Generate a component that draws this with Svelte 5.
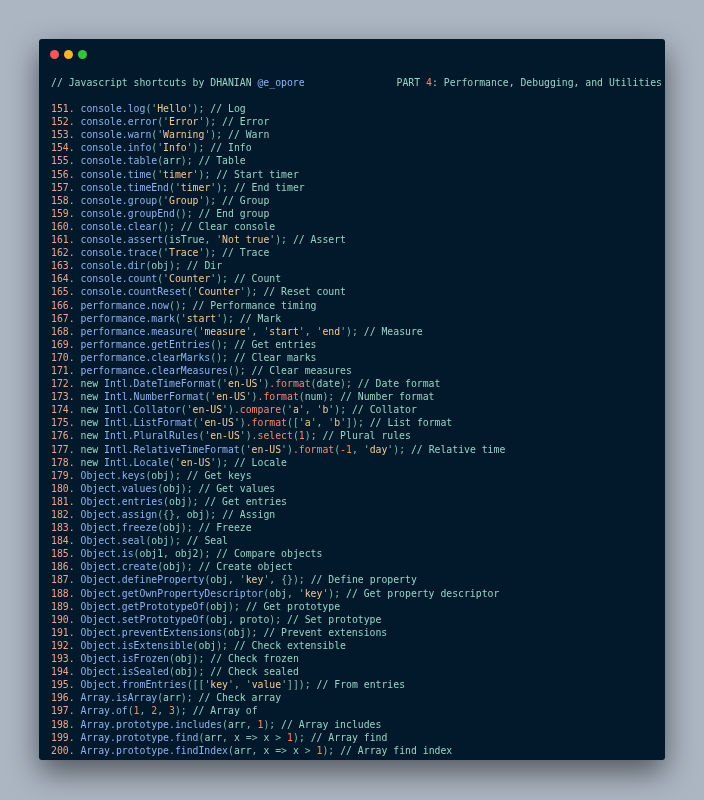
<script lang="ts">
  const source = `console.log('Hello'); // Log
console.error('Error'); // Error
console.warn('Warning'); // Warn
console.info('Info'); // Info
console.table(arr); // Table
console.time('timer'); // Start timer
console.timeEnd('timer'); // End timer
console.group('Group'); // Group
console.groupEnd(); // End group
console.clear(); // Clear console
console.assert(isTrue, 'Not true'); // Assert
console.trace('Trace'); // Trace
console.dir(obj); // Dir
console.count('Counter'); // Count
console.countReset('Counter'); // Reset count
performance.now(); // Performance timing
performance.mark('start'); // Mark
performance.measure('measure', 'start', 'end'); // Measure
performance.getEntries(); // Get entries
performance.clearMarks(); // Clear marks
performance.clearMeasures(); // Clear measures
new Intl.DateTimeFormat('en-US').format(date); // Date format
new Intl.NumberFormat('en-US').format(num); // Number format
new Intl.Collator('en-US').compare('a', 'b'); // Collator
new Intl.ListFormat('en-US').format(['a', 'b']); // List format
new Intl.PluralRules('en-US').select(1); // Plural rules
new Intl.RelativeTimeFormat('en-US').format(-1, 'day'); // Relative time
new Intl.Locale('en-US'); // Locale
Object.keys(obj); // Get keys
Object.values(obj); // Get values
Object.entries(obj); // Get entries
Object.assign({}, obj); // Assign
Object.freeze(obj); // Freeze
Object.seal(obj); // Seal
Object.is(obj1, obj2); // Compare objects
Object.create(obj); // Create object
Object.defineProperty(obj, 'key', {}); // Define property
Object.getOwnPropertyDescriptor(obj, 'key'); // Get property descriptor
Object.getPrototypeOf(obj); // Get prototype
Object.setPrototypeOf(obj, proto); // Set prototype
Object.preventExtensions(obj); // Prevent extensions
Object.isExtensible(obj); // Check extensible
Object.isFrozen(obj); // Check frozen
Object.isSealed(obj); // Check sealed
Object.fromEntries([['key', 'value']]); // From entries
Array.isArray(arr); // Check array
Array.of(1, 2, 3); // Array of
Array.prototype.includes(arr, 1); // Array includes
Array.prototype.find(arr, x => x > 1); // Array find
Array.prototype.findIndex(arr, x => x > 1); // Array find index`;

  type Token = { text: string; kind: string };

  // rough highlighter, just enough for these lines
  function tokenize(line: string): Token[] {
    const at = line.indexOf(' // ');
    const code = line.slice(0, at);
    const tokens: Token[] = [];
    const re = /'[^']*'|\)\.[A-Za-z]+|\.[A-Za-z]+|[A-Za-z_][A-Za-z0-9_]*|-?\d+|\s+|./g;
    for (const m of code.matchAll(re)) {
      const t = m[0];
      if (t[0] === "'") {
        tokens.push({ text: "'", kind: 'punct' });
        tokens.push({ text: t.slice(1, -1), kind: 'str' });
        tokens.push({ text: "'", kind: 'punct' });
      } else if (t.startsWith(').')) {
        tokens.push({ text: ')', kind: 'punct' });
        tokens.push({ text: t.slice(1), kind: 'chain' });
      } else if (t[0] === '.') {
        tokens.push({ text: t, kind: 'fn' });
      } else if (/^-?\d/.test(t)) {
        tokens.push({ text: t, kind: 'num' });
      } else if (/^(console|performance|Intl|Object|Array)$/.test(t)) {
        tokens.push({ text: t, kind: 'fn' });
      } else if (/^[A-Za-z_]/.test(t)) {
        tokens.push({ text: t, kind: 'var' });
      } else {
        tokens.push({ text: t, kind: 'punct' });
      }
    }
    tokens.push({ text: line.slice(at), kind: 'comment' });
    return tokens;
  }

  const lines = source.split('\n').map((text, i) => ({ n: `${151 + i}. `, tokens: tokenize(text) }));
</script>

<div class="page">
  <div class="window">
    <div class="dots">
      <span class="dot red"></span>
      <span class="dot yellow"></span>
      <span class="dot green"></span>
    </div>
    <div class="title">
      <span class="comment">// Javascript shortcuts by DHANIAN <span class="handle">@e_opore</span></span>
      <span class="comment">PART <span class="num">4</span>: Performance, Debugging, and Utilities</span>
    </div>
    <div class="code">
      {#each lines as line}
        <div class="line"><span class="lineno">{line.n}</span>{#each line.tokens as t}<span class={t.kind}>{t.text}</span>{/each}</div>
      {/each}
    </div>
  </div>
</div>

<style>
  :global(body) {
    margin: 0;
    background: #acb6c2;
  }
  .page {
    width: 704px;
    height: 800px;
    box-sizing: border-box;
    padding: 39px;
    background: #acb6c2;
    overflow: hidden;
  }
  .window {
    width: 626px;
    height: 721px;
    box-sizing: border-box;
    background: #02182b;
    border-radius: 3px;
    box-shadow: 0 12px 30px rgba(20, 24, 30, 0.6);
    padding: 11px 0 0 11px;
    font-family: "DejaVu Sans Mono", monospace;
    font-size: 9.8px;
    line-height: 13.1px;
    overflow: hidden;
  }
  .dots {
    display: flex;
    gap: 5px;
    height: 9px;
  }
  .dot {
    width: 9px;
    height: 9px;
    border-radius: 50%;
  }
  .red { background: #f9565a; }
  .yellow { background: #f5b62c; }
  .green { background: #35c43f; }
  .title {
    display: flex;
    justify-content: space-between;
    padding: 0 3px 0 1px;
    margin-top: 17px;
    white-space: pre;
    filter: blur(0.3px);
  }
  .code {
    margin-top: 13px;
    padding-left: 1px;
    filter: blur(0.3px);
  }
  .line {
    height: 13.1px;
    white-space: pre;
  }
  .lineno { color: #eba58e; }
  .comment { color: #98d4c5; }
  .handle { color: #8fb4f5; }
  .fn { color: #90b2ee; }
  .var { color: #98d4c5; }
  .punct { color: #84bcb0; }
  .str { color: #f0ca96; }
  .num { color: #f78c6c; }
  .chain { color: #f08d71; }
</style>
